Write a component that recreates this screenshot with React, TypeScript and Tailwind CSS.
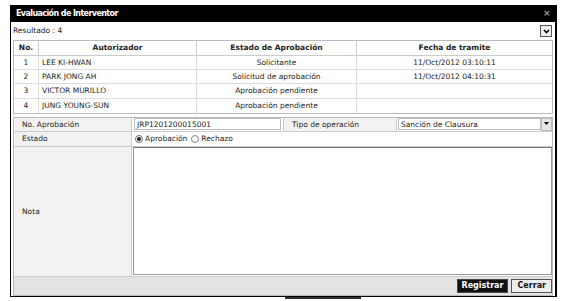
import React from "react";

const font = { fontFamily: '"DejaVu Sans", Verdana, sans-serif' };

export default function App() {
  const rows = [
    ["1", "LEE KI-HWAN", "Solicitante", "11/Oct/2012 03:10:11"],
    ["2", "PARK JONG AH", "Solicitud de aprobación", "11/Oct/2012 04:10:31"],
    ["3", "VICTOR MURILLO", "Aprobación pendiente", ""],
    ["4", "JUNG YOUNG-SUN", "Aprobación pendiente", ""],
  ];
  return (
    <div className="w-[567px] h-[301px] bg-white relative overflow-hidden text-[7.5px] text-[#222]" style={font}>
      <div className="absolute left-[10px] top-[5px] w-[547px] h-[292px] border border-black border-r-2 bg-white flex flex-col">
        <div className="h-[16px] bg-black text-white font-bold text-[8px] tracking-[-0.6px] flex items-center justify-between pl-[5px] pr-[5px]">
          <span>Evaluación de Interventor</span>
          <span className="text-[#ccc] text-[9px] font-normal">×</span>
        </div>
        <div className="h-[18px] flex items-center justify-between pl-[2px] pr-[3px]">
          <span>Resultado : 4</span>
          <div className="w-[12px] h-[12px] border border-[#555] bg-[#eee] flex items-center justify-center">
            <svg width="7" height="5" viewBox="0 0 7 5"><path d="M1 1 L3.5 3.5 L6 1" stroke="#000" strokeWidth="1.6" fill="none" /></svg>
          </div>
        </div>
        <div className="mx-[2px] border border-[#bbb]">
          <div className="grid grid-cols-[25px_158px_160px_1fr] h-[15px] font-bold border-b border-[#ccc]">
            <div className="flex items-center justify-center border-r border-[#ccc]">No.</div>
            <div className="flex items-center justify-center border-r border-[#ccc]">Autorizador</div>
            <div className="flex items-center justify-center border-r border-[#ccc]">Estado de Aprobación</div>
            <div className="flex items-center justify-center">Fecha de tramite</div>
          </div>
          {rows.map((r, i) => (
            <div key={i} className={`grid grid-cols-[25px_158px_160px_1fr] h-[14.2px] ${i < 3 ? "border-b border-[#ddd]" : ""}`}>
              <div className="flex items-center justify-center border-r border-[#ddd]">{r[0]}</div>
              <div className="flex items-center pl-[3px] border-r border-[#ddd]">{r[1]}</div>
              <div className="flex items-center justify-center border-r border-[#ddd]">{r[2]}</div>
              <div className="flex items-center justify-center">{r[3]}</div>
            </div>
          ))}
        </div>
        <div className="mx-[2px] mt-[3px] border border-[#bbb] flex flex-col flex-1">
          <div className="grid grid-cols-[118px_152px_113px_1fr] h-[14px] border-b border-[#ccc]">
            <div className="bg-[#f2f2f2] flex items-center pl-[8px] border-r border-[#ccc]">No. Aprobación</div>
            <div className="flex items-center px-[2px] border-r border-[#ccc]">
              <div className="w-full h-[12px] border border-[#bbb] flex items-center pl-[2px]">JRP1201200015001</div>
            </div>
            <div className="bg-[#f2f2f2] flex items-center pl-[8px] border-r border-[#ccc]">Tipo de operación</div>
            <div className="flex items-center pl-[1px]">
              <div className="flex-1 h-[12px] border border-[#bbb] flex items-center pl-[2px]">Sanción de Clausura</div>
              <div className="w-[11px] h-[13px] bg-[#e6e6e6] border border-[#bbb] flex items-center justify-center">
                <svg width="5" height="4" viewBox="0 0 5 4"><path d="M0 0 H5 L2.5 3 Z" fill="#000" /></svg>
              </div>
            </div>
          </div>
          <div className="grid grid-cols-[118px_1fr] h-[15px] border-b border-[#ccc]">
            <div className="bg-[#f2f2f2] flex items-center pl-[8px] border-r border-[#ccc]">Estado</div>
            <div className="flex items-center pl-[3px] gap-[2px]">
              <span className="w-[8px] h-[8px] rounded-full border border-[#666] flex items-center justify-center">
                <span className="w-[4px] h-[4px] rounded-full bg-[#222]" />
              </span>
              <span>Aprobación</span>
              <span className="ml-[2px] w-[8px] h-[8px] rounded-full border border-[#888]" />
              <span>Rechazo</span>
            </div>
          </div>
          <div className="grid grid-cols-[118px_1fr] flex-1">
            <div className="bg-[#f2f2f2] flex items-center pl-[8px] border-r border-[#ccc]">Nota</div>
            <div className="pl-[1px] pb-[1px]">
              <div className="w-full h-full border border-[#999] border-t-[#777] bg-white" />
            </div>
          </div>
          <div className="h-[19px] bg-[#e3e3e3] flex items-center justify-end gap-[3px] pr-[0px] border-t border-[#ccc]">
            <button className="h-[14px] px-[4px] bg-[#111] text-white font-bold text-[8px] border border-[#444]">Registrar</button>
            <button className="h-[14px] px-[5px] bg-[#eee] text-[#111] font-bold text-[8px] border border-[#555]">Cerrar</button>
          </div>
        </div>
      </div>
      <div className="absolute left-[285px] top-[297px] w-[76px] h-[2px] bg-[#333]" />
    </div>
  );
}
